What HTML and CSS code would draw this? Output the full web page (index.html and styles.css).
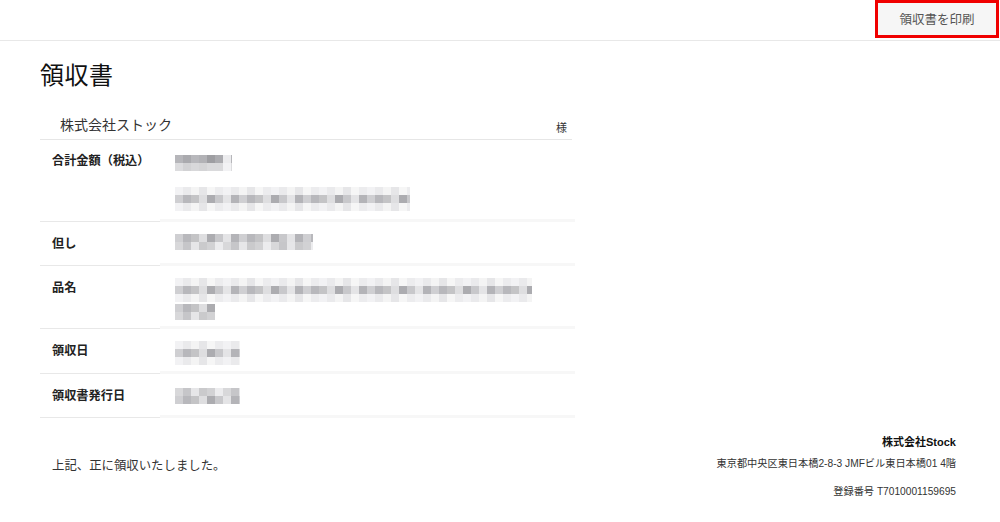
FILE: index.html
```html
<!DOCTYPE html>
<html lang="ja">
<head>
<meta charset="utf-8">
<title>領収書</title>
<link rel="stylesheet" href="styles.css">
</head>
<body>
<header class="topbar">
  <button class="print-btn">領収書を印刷</button>
</header>
<main class="page">
  <h1 class="title">領収書</h1>
  <div class="recipient">
    <span class="recipient-name">株式会社ストック</span>
    <span class="honorific">様</span>
  </div>
  <div class="rows">
    <div class="row row-total">
      <div class="label">合計金額（税込）</div>
      <div class="value">
        <div class="px px-amount"><i class="r dark"></i><i class="r light"></i></div>
        <div class="px px-note"><i class="r faint"></i><i class="r mid"></i><i class="r faint"></i></div>
      </div>
    </div>
    <div class="row row-short">
      <div class="label">但し</div>
      <div class="value">
        <div class="px px-tadashi"><i class="r mid"></i><i class="r mid2"></i></div>
      </div>
    </div>
    <div class="row row-item">
      <div class="label">品名</div>
      <div class="value">
        <div class="px px-item"><i class="r faint"></i><i class="r mid"></i><i class="r faint"></i></div>
        <div class="px px-item2"><i class="r mid"></i><i class="r mid2"></i></div>
      </div>
    </div>
    <div class="row row-date">
      <div class="label">領収日</div>
      <div class="value">
        <div class="px px-date"><i class="r faint"></i><i class="r mid"></i><i class="r faint"></i></div>
      </div>
    </div>
    <div class="row row-short">
      <div class="label">領収書発行日</div>
      <div class="value">
        <div class="px px-date2"><i class="r mid2"></i><i class="r mid"></i></div>
      </div>
    </div>
  </div>
  <footer class="foot">
    <p class="received">上記、正に領収いたしました。</p>
    <div class="issuer">
      <p class="issuer-name">株式会社Stock</p>
      <p class="issuer-line">東京都中央区東日本橋2-8-3 JMFビル東日本橋01 4階</p>
      <p class="issuer-line reg">登録番号 T7010001159695</p>
    </div>
  </footer>
</main>
</body>
</html>
```

FILE: styles.css
```css
* { box-sizing: border-box; }
html, body { margin: 0; padding: 0; background: #fff; }
body {
  font-family: "Liberation Sans", "Noto Sans CJK JP", sans-serif;
  color: #222;
  width: 1000px;
  height: 522px;
  overflow: hidden;
}
.topbar {
  height: 41px;
  border-bottom: 1px solid #e8e8e8;
  display: flex;
  justify-content: flex-end;
  align-items: flex-start;
  padding-right: 1px;
}
.print-btn {
  width: 124px;
  height: 38px;
  margin: 0;
  border: 3px solid #f00000;
  background: #f6f6f6;
  color: #555;
  font-family: "Noto Sans CJK JP", sans-serif;
  font-size: 12.5px;
  padding: 0 0 1px;
  cursor: pointer;
}
.page {
  padding: 0 44px 0 40px;
}
.title {
  margin: 18px 0 0;
  font-family: "Noto Sans CJK JP", sans-serif;
  font-weight: 400;
  font-size: 24px;
  line-height: 30px;
  color: #111;
  letter-spacing: 0.5px;
}
.recipient {
  width: 532px;
  margin-top: 22px;
  height: 29px;
  border-bottom: 1px solid #e6e6e6;
  display: flex;
  justify-content: space-between;
  align-items: flex-end;
  padding: 0 5px 5px 20px;
}
.recipient-name {
  font-family: "Noto Sans CJK JP", sans-serif;
  font-size: 14px;
  color: #333;
  line-height: 20px;
}
.honorific {
  font-family: "Noto Sans CJK JP", sans-serif;
  font-size: 11px;
  line-height: 14px;
  color: #333;
}
.rows { width: 535px; }
.row {
  display: flex;
}
.row-total { height: 82px; }
.row-short { height: 44px; }
.row-item { height: 63px; }
.row-date { height: 45px; }
.label {
  width: 120px;
  flex: none;
  border-bottom: 1px solid #e8e8e8;
  padding: 13px 0 0 12px;
  font-family: "Noto Sans CJK JP", sans-serif;
  font-weight: 700;
  font-size: 12.2px;
  line-height: 16px;
  color: #222;
}
.row-total .label { padding-top: 12px; }
.value {
  flex: 1;
  padding: 12px 0 0 15px;
  border-bottom: 3px solid #f7f7f7;
}
.px {
  display: flex;
  flex-direction: column;
}
.px .r {
  display: block;
  height: 8px;
}
.px-amount { width: 57px; margin-top: 3px; }
.px-note { width: 235px; margin-top: 16px; }
.px-tadashi { width: 138px; }
.px-item { width: 357px; margin-top: 0; }
.px-item2 { width: 40px; margin-top: 2px; }
.px-date { width: 65px; margin-top: 0; }
.px-date2 { width: 65px; margin-top: 2px; }
.r.dark {
  background: repeating-linear-gradient(90deg, #b6b6ba 0 8px, #aaaaae 8px 16px, #b8b8bc 16px 24px, #b2b2b6 24px 32px, #9e9ea2 32px 40px, #acacb0 40px 48px, #ececee 48px 56px);
}
.r.light {
  background: repeating-linear-gradient(90deg, #dcdcde 0 8px, #d2d2d4 8px 16px, #d8d8da 16px 24px, #d4d4d6 24px 32px, #dadadc 32px 48px, #f2f2f4 48px 56px);
}
.r.faint {
  background: repeating-linear-gradient(90deg, #f2f2f4 0 8px, #eaeaec 8px 16px, #f4f4f4 16px 24px, #e6e6e8 24px 32px, #f6f6f6 32px 40px, #ececee 40px 48px);
}
.r.mid {
  background: repeating-linear-gradient(90deg, #cfcfd2 0 8px, #b8b8bc 8px 16px, #c4c4c6 16px 24px, #dedee0 24px 32px, #acacb0 32px 40px, #c8c8cb 40px 48px, #e4e4e6 48px 56px, #b4b4b8 56px 64px);
}
.r.mid2 {
  background: repeating-linear-gradient(90deg, #d8d8da 0 8px, #c6c6c9 8px 16px, #e6e6e8 16px 24px, #cacacc 24px 32px, #d2d2d4 32px 40px, #ececee 40px 48px);
}
.foot {
  display: flex;
  justify-content: space-between;
  padding-top: 16px;
}
.received {
  margin: 23px 0 0 12px;
  font-family: "Noto Sans CJK JP", sans-serif;
  font-size: 12.4px;
  line-height: 16px;
  color: #333;
}
.issuer {
  text-align: right;
  font-size: 10.2px;
  color: #333;
}
.issuer p { margin: 0; }
.issuer-name {
  font-weight: 700;
  font-size: 11px;
  color: #111;
  line-height: 16px;
}
.issuer-line {
  margin-top: 6px !important;
  line-height: 16px;
}
.issuer-line.reg {
  margin-top: 12px !important;
}
```
